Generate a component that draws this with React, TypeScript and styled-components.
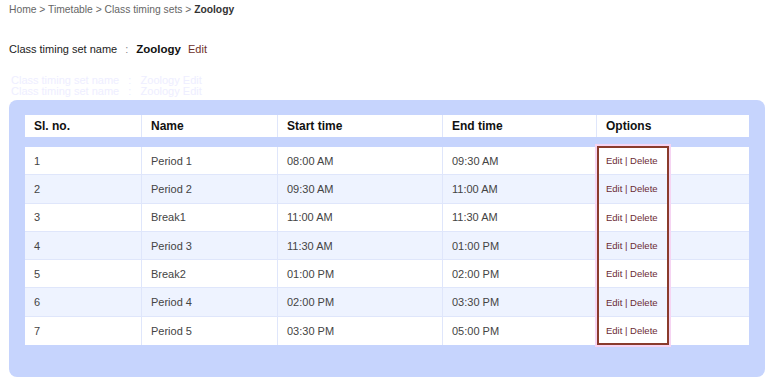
import * as React from 'react';
import styled, { createGlobalStyle } from 'styled-components';

const GlobalStyle = createGlobalStyle`
  body {
    margin: 0;
    background: #fff;
    font-family: "Liberation Sans", Arial, sans-serif;
  }
`;

const Page = styled.div`
  padding: 3px 3px 0 9px;
`;

const Breadcrumb = styled.div`
  font-size: 10.3px;
  line-height: 14px;
  color: #666;
`;

const Current = styled.b`
  color: #333;
`;

const TitleLine = styled.div`
  margin-top: 24px;
  font-size: 11px;
  line-height: 16px;
  color: #222;
  display: flex;
  align-items: baseline;
`;

const Colon = styled.span`
  color: #888;
  margin: 0 8px 0 8px;
`;

const SetName = styled.b`
  font-size: 11.5px;
  color: #111;
  margin-right: 7px;
`;

const EditLink = styled.a`
  color: #6e3128;
  text-decoration: none;
`;

const Ghost = styled.div`
  margin-top: 18px;
  height: 25px;
  font-size: 11px;
  line-height: 11px;
  color: #eeeeff;
  overflow: hidden;
  padding-left: 2px;
`;

const Panel = styled.div`
  background: #c6d4fd;
  border-radius: 8px;
  padding: 15px 16px 32px 16px;
`;

const cols = '117px 136px 165px 154px 152px';

const HeaderRow = styled.div`
  display: grid;
  grid-template-columns: ${cols};
  background: #fff;
  height: 22px;
`;

const HeadCell = styled.div<{ $last?: boolean }>`
  font-size: 12px;
  font-weight: bold;
  color: #111;
  line-height: 22px;
  padding-left: 9px;
  border-right: ${p => (p.$last ? 'none' : '1px solid #dfe6fb')};
`;

const Body = styled.div<{ $rows: number }>`
  margin-top: 10px;
  display: grid;
  grid-template-columns: ${cols};
  grid-template-rows: repeat(${p => p.$rows}, 28.3px);
`;

const Cell = styled.div<{ $alt: boolean; $last?: boolean; $bottom?: boolean }>`
  box-sizing: border-box;
  background: ${p => (p.$alt ? '#eef3ff' : '#fff')};
  border-right: ${p => (p.$last ? 'none' : '1px solid #dfe6fb')};
  border-bottom: ${p => (p.$bottom ? 'none' : '1px solid #dfe6fb')};
  font-size: 11px;
  color: #444;
  padding-left: 9px;
  display: flex;
  align-items: center;
`;

const Options = styled.span`
  font-size: 9.5px;
  color: #6b2b35;
`;

const OptionBox = styled.div`
  grid-column: 5;
  grid-row: 1 / -1;
  width: 72px;
  margin-top: -1px;
  border: 2px solid #8a3b2c;
  box-sizing: border-box;
  box-shadow: 0 0 0 2px #f6d4f2;
  pointer-events: none;
  z-index: 1;
`;

const rows = [
  ['1', 'Period 1', '08:00 AM', '09:30 AM'],
  ['2', 'Period 2', '09:30 AM', '11:00 AM'],
  ['3', 'Break1', '11:00 AM', '11:30 AM'],
  ['4', 'Period 3', '11:30 AM', '01:00 PM'],
  ['5', 'Break2', '01:00 PM', '02:00 PM'],
  ['6', 'Period 4', '02:00 PM', '03:30 PM'],
  ['7', 'Period 5', '03:30 PM', '05:00 PM'],
];

export default function App() {
  return (
    <Page>
      <GlobalStyle />
      <Breadcrumb>
        Home &gt; Timetable &gt; Class timing sets &gt; <Current>Zoology</Current>
      </Breadcrumb>
      <TitleLine>
        Class timing set name<Colon>:</Colon>
        <SetName>Zoology</SetName>
        <EditLink href="#">Edit</EditLink>
      </TitleLine>
      <Ghost>
        Class timing set name &nbsp; : &nbsp; Zoology Edit
        <br />
        Class timing set name &nbsp; : &nbsp; Zoology Edit
      </Ghost>
      <Panel>
        <HeaderRow>
          <HeadCell>Sl. no.</HeadCell>
          <HeadCell>Name</HeadCell>
          <HeadCell>Start time</HeadCell>
          <HeadCell>End time</HeadCell>
          <HeadCell $last>Options</HeadCell>
        </HeaderRow>
        <Body $rows={rows.length}>
          {rows.map((r, i) => {
            const alt = i % 2 === 1;
            const bottom = i === rows.length - 1;
            return (
              <React.Fragment key={r[0]}>
                {r.map((v, j) => (
                  <Cell key={j} $alt={alt} $bottom={bottom} style={{ gridRow: i + 1, gridColumn: j + 1 }}>
                    {v}
                  </Cell>
                ))}
                <Cell $alt={alt} $bottom={bottom} $last style={{ gridRow: i + 1, gridColumn: 5 }}>
                  <Options>Edit | Delete</Options>
                </Cell>
              </React.Fragment>
            );
          })}
          <OptionBox />
        </Body>
      </Panel>
    </Page>
  );
}
